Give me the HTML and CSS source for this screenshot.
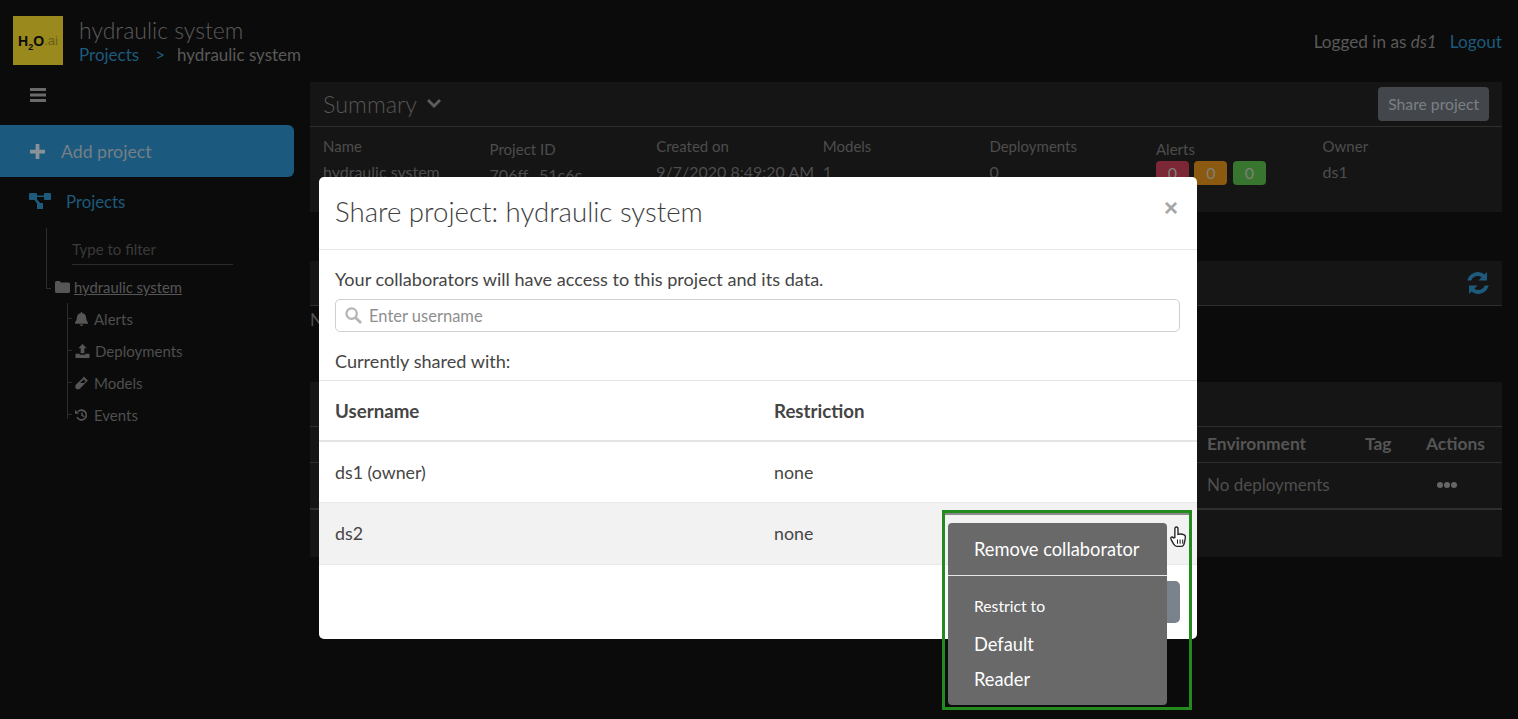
FILE: index.html
```html
<!DOCTYPE html>
<html lang="en">
<head>
    <meta charset="UTF-8">
    <title>hydraulic system</title>
    <link rel="stylesheet" href="styles.css">
</head>
<body>

<header class="topbar">
    <div class="logo"><span class="logo-h">H<sub>2</sub>O</span><span class="logo-ai">.ai</span></div>
    <div class="titles">
        <div class="page-title">hydraulic system</div>
        <div class="crumbs"><a class="link">Projects</a><span class="link sep">&gt;</span><span>hydraulic system</span></div>
    </div>
    <div class="login">Logged in as <em>ds1</em><a class="link logout">Logout</a></div>
</header>

<div class="layout">
    <aside class="sidebar">
        <svg class="burger" viewBox="0 0 16 14"><path d="M0 0h16v3H0zM0 5.500h16v3H0zM0 11h16v3H0z"/></svg>
        <div class="add-project">
            <svg class="plus" viewBox="0 0 16 16"><path d="M6 0h4v6h6v4h-6v6H6v-6H0V6h6z"/></svg>
            <span>Add project</span>
        </div>
        <div class="nav-projects">
            <svg class="sitemap" viewBox="0 0 22 16"><path d="M1 0h6q1 0 1 1v1.500h7V1q0-1 1-1h5q1 0 1 1v5q0 1-1 1h-5q-1 0-1-1V4H8v2.500L11.300 10H14v6H8v-5.500L5.500 7H1Q0 7 0 6V1q0-1 1-1z"/></svg>
            <span>Projects</span>
        </div>
        <div class="tree">
            <div class="filter">Type to filter</div>
            <div class="project-node">
                <svg class="folder" viewBox="0 0 15 12"><path d="M0 1.500Q0 0 1.500 0h3L6 1.500h7.500Q15 1.500 15 3v7.500q0 1.500-1.500 1.500h-12Q0 12 0 10.500z"/></svg>
                <span class="node-name">hydraulic system</span>
            </div>
            <ul class="subnav">
                <li>
                    <svg class="sub-icon" viewBox="0 0 14 15"><path d="M7 0q1 0 1 1.200 4 .8 4 5 0 3 2 5.300V12.500H0v-1Q2 9.200 2 6.200q0-4.200 4-5Q6 0 7 0zM5 13.500h4Q8.800 15 7 15t-2-1.500z"/></svg>
                    <span>Alerts</span>
                </li>
                <li>
                    <svg class="sub-icon wide" viewBox="0 0 15 15"><path d="M7.500 0l4.500 4.500H9.500V10h-4V4.500H3zM0 10.500h4.500v1h6v-1H15V15H0z"/></svg>
                    <span class="after-wide">Deployments</span>
                </li>
                <li>
                    <svg class="sub-icon" viewBox="0 0 14 14"><path d="M9.500 0L14 4.500 12.800 5.500 5.500 12.800Q3.500 14.500 1.500 13.500T.8 9L8.500 1.500zM9.300 3.200L5.500 7h4.200l1.800-1.800z" fill-rule="evenodd"/></svg>
                    <span>Models</span>
                </li>
                <li>
                    <svg class="sub-icon" viewBox="0 0 16 15"><path class="outline" d="M3.500 3.500A6 6 0 1 1 2.500 10" stroke-width="2"/><path class="outline" d="M8.500 4.500V8l3 1.500" stroke-width="1.700"/><path d="M0 1l5 5H0z"/></svg>
                    <span>Events</span>
                </li>
            </ul>
        </div>
    </aside>

    <main class="content">
        <section class="panel summary">
            <div class="panel-head">
                <h2>Summary</h2>
                <svg class="chevron" viewBox="0 0 14 10"><path d="M2 0l5 5 5-5 2 2-7 7-7-7z"/></svg>
                <button class="btn-share">Share project</button>
            </div>
            <div class="facts">
                <div class="fact"><label>Name</label><div>hydraulic system</div></div>
                <div class="fact low"><label>Project ID</label><div>706ff...51c6c</div></div>
                <div class="fact"><label>Created on</label><div>9/7/2020 8:49:20 AM</div></div>
                <div class="fact"><label>Models</label><div>1</div></div>
                <div class="fact"><label>Deployments</label><div>0</div></div>
                <div class="fact low">
                    <label>Alerts</label>
                    <div class="badges"><span class="badge red">0</span><span class="badge orange">0</span><span class="badge green">0</span></div>
                </div>
                <div class="fact"><label>Owner</label><div>ds1</div></div>
            </div>
        </section>

        <section class="panel alerts">
            <div class="panel-head short">
                <svg class="refresh" viewBox="0 0 24 24"><path d="M21 1v8.500h-8.500l3.200-3.200A6.800 6.800 0 0 0 5.200 9.500H1.300A10.500 10.500 0 0 1 18.400 3.600zM3 23v-8.500h8.500l-3.200 3.200a6.800 6.800 0 0 0 10.500-3.200h3.900A10.500 10.500 0 0 1 5.600 20.400z"/></svg>
            </div>
            <div class="panel-note">None</div>
        </section>

        <section class="panel deployments">
            <div class="deploy-head"></div>
            <div class="deploy-row th"><span class="c-env">Environment</span><span class="c-tag">Tag</span><span class="c-act">Actions</span></div>
            <div class="deploy-row td">
                <span class="c-env">No deployments</span><span class="c-tag"></span>
                <span class="c-act"><span class="dots"><i></i><i></i><i></i></span></span>
            </div>
        </section>
    </main>
</div>

<div class="modal">
    <div class="modal-head">
        <h3>Share project: hydraulic system</h3>
        <span class="close">&times;</span>
    </div>
    <div class="modal-body">
        <p>Your collaborators will have access to this project and its data.</p>
        <div class="search">
            <svg class="search-icon" viewBox="0 0 18 18"><circle class="outline" cx="7" cy="7" r="5.500" stroke-width="2.400"/><path class="outline" d="M11 11l6 6" stroke-width="3"/></svg>
            <span>Enter username</span>
        </div>
        <p class="shared">Currently shared with:</p>
    </div>
    <div class="row head"><span class="col-user">Username</span><span>Restriction</span></div>
    <div class="row"><span class="col-user">ds1 (owner)</span><span>none</span></div>
    <div class="row hovered"><span class="col-user">ds2</span><span>none</span></div>
    <div class="modal-foot"><button class="btn-close">Close</button></div>
</div>

<div class="callout"></div>
<div class="dropdown">
    <div class="dd-item">Remove collaborator</div>
    <div class="dd-section">
        <div class="dd-label">Restrict to</div>
        <div class="dd-item">Default</div>
        <div class="dd-item">Reader</div>
    </div>
</div>
<svg class="hand" viewBox="0 0 16 22"><path d="M5 11V3q0-2 1.500-2T8 3v5q3-.8 6 .5 1.500.8 1 3l-1 5q-.5 3-3 3H7q-2 0-3-2L1.500 13q-1-1.500 0-2.200T4 11.500z"/><path class="lines" d="M7.500 13v4M10 13v4M12.500 13v4"/></svg>

</body>
</html>
```

FILE: styles.css
```css
* {
    box-sizing: border-box;
}
html, body {
    height: 100%;
}
body {
    margin: 0;
    height: 719px;
    overflow: hidden;
    background-color: #0b0b0b;
    color: #525252;
    font-family: "Lato", "Noto Sans", sans-serif;
    font-size: 17px;
}
svg {
    display: block;
    flex: none;
    fill: currentColor;
    stroke: currentColor;
    stroke-width: 0;
}
svg .outline {
    fill: none;
}
.link {
    color: #1d5a7c;
}

/* top bar */
.topbar {
    display: flex;
    align-items: flex-start;
    height: 82px;
    padding: 16px 16px 0 13px;
}
.logo {
    display: flex;
    align-items: center;
    justify-content: center;
    width: 50px;
    height: 49px;
    background-color: #9a8a1d;
    color: #0b0b0b;
    font-family: "Liberation Sans", sans-serif;
    font-size: 14px;
    font-weight: bold;
}
.logo sub {
    font-size: 9px;
    line-height: 0;
}
.logo-ai {
    font-size: 13px;
    font-weight: normal;
    color: #6b5f16;
}
.titles {
    margin-left: 16px;
}
.page-title {
    font-size: 23px;
    line-height: 28px;
    font-weight: 300;
    color: #5c5c5c;
}
.crumbs {
    display: flex;
    line-height: 22px;
    font-size: 17px;
    color: #595959;
}
.sep {
    margin: 0 12px 0 16px;
}
.login {
    margin-left: auto;
    margin-top: 15px;
    line-height: 22px;
    font-size: 17.200px;
    color: #595959;
}
.logout {
    margin-left: 13px;
}

/* layout */
.layout {
    display: flex;
}
.sidebar {
    width: 310px;
    flex: none;
}
.content {
    flex: 1;
    margin-right: 16px;
}

/* sidebar */
.burger {
    width: 16px;
    height: 14px;
    margin: 6px 0 0 30px;
    color: #6a6a6a;
}
.add-project {
    display: flex;
    align-items: center;
    width: 294px;
    height: 52px;
    margin-top: 23px;
    padding-left: 30px;
    background-color: #1b5a7e;
    border-radius: 0 6px 6px 0;
    color: #757f85;
    font-size: 17.700px;
}
.plus {
    width: 15px;
    height: 15px;
    margin-right: 16px;
    color: #8a9297;
}
.nav-projects {
    display: flex;
    align-items: center;
    height: 50px;
    padding: 0 0 2px 29px;
    color: #1d5a7c;
    font-size: 16.800px;
}
.sitemap {
    width: 22px;
    height: 16px;
    margin-right: 15px;
}
.tree {
    position: relative;
    margin-left: 46px;
    padding-left: 26px;
    padding-top: 11px;
}
.tree::before {
    content: "";
    position: absolute;
    left: 0;
    top: 1px;
    width: 4px;
    height: 60px;
    border-left: 1px solid #2c2c2c;
    border-bottom: 1px solid #2c2c2c;
}
.filter {
    width: 161px;
    height: 27px;
    font-size: 15px;
    line-height: 22px;
    color: #3a3a3a;
    border-bottom: 1px solid #2c2c2c;
}
.project-node {
    display: flex;
    align-items: center;
    height: 22px;
    margin-top: 11px;
    margin-left: -17px;
    font-size: 14.800px;
    color: #565656;
}
.folder {
    width: 15px;
    height: 12px;
    margin-right: 4px;
}
.node-name {
    text-decoration: underline;
}
.subnav {
    position: relative;
    list-style: none;
    margin: 5px 0 0 -1px;
    padding: 0;
    font-size: 15px;
    color: #4f4f4f;
}
.subnav::before {
    content: "";
    position: absolute;
    left: -4px;
    top: 0;
    height: 116px;
    width: 0;
    border-left: 1px solid #2c2c2c;
}
.subnav li {
    position: relative;
    display: flex;
    align-items: center;
    height: 32px;
    padding-left: 4px;
}
.subnav li::before {
    content: "";
    position: absolute;
    left: -4px;
    top: 15px;
    width: 5px;
    border-top: 1px solid #2c2c2c;
}
.sub-icon {
    width: 13px;
    height: 14px;
    margin-right: 6px;
    color: #565656;
}
.sub-icon.wide {
    width: 15px;
}
.after-wide {
    margin-left: -1px;
}

/* panels */
.panel {
    background-color: #151515;
    margin-bottom: 49px;
}
.panel-head {
    display: flex;
    align-items: center;
    height: 45px;
    padding: 0 13px;
    border-bottom: 1px solid #2f2f2f;
}
.panel-head h2 {
    margin: 0;
    font-size: 23.400px;
    font-weight: 300;
    color: #565656;
}
.chevron {
    width: 14px;
    height: 10px;
    margin-left: 10px;
    color: #5c5c5c;
}
.btn-share {
    margin-left: auto;
    width: 111px;
    height: 34px;
    padding: 0;
    border: none;
    border-radius: 4px;
    background-color: #43474c;
    color: #7b8085;
    font-family: inherit;
    font-size: 15.700px;
}
.summary {
    height: 130px;
}
.facts {
    display: grid;
    grid-template-columns: repeat(7, 166.600px);
    padding: 9px 13px 0;
    font-size: 16px;
    color: #4d4d4d;
}
.fact label {
    display: block;
    font-size: 15px;
    line-height: 20px;
    margin-bottom: 6px;
    color: #4d4d4d;
}
.fact.low {
    padding-top: 3px;
}
.fact.low .badges {
    margin-top: -4px;
}
.badges {
    display: flex;
    gap: 5.500px;
}
.badge {
    width: 33px;
    height: 24px;
    border-radius: 4px;
    text-align: center;
    line-height: 24px;
    color: #80807a;
}
.red {
    background-color: #7c2735;
}
.orange {
    background-color: #8b5a10;
}
.green {
    background-color: #38762f;
}
.panel.alerts {
    height: 72px;
    background: none;
}
.panel-head.short {
    height: 45px;
    justify-content: flex-end;
    background-color: #151515;
}
.refresh {
    width: 24px;
    height: 24px;
    margin-right: -1px;
    color: #1d5a7c;
}
.panel-note {
    margin-top: 2px;
    line-height: 24px;
}
.deploy-head {
    height: 45px;
    border-bottom: 1px solid #2f2f2f;
}
.deployments {
    height: 175px;
    margin-bottom: 0;
}
.deploy-row {
    display: flex;
    align-items: center;
    padding-left: 897px;
    padding-bottom: 2px;
    border-bottom: 1px solid #2f2f2f;
}
.deploy-row.th {
    height: 36px;
    font-size: 17.400px;
    font-weight: bold;
    color: #555;
}
.deploy-row.td {
    height: 47px;
    color: #4f4f4f;
    border-bottom-width: 2px;
}
.c-env {
    width: 158px;
}
.c-tag {
    width: 61px;
}
.dots {
    display: flex;
    gap: 1px;
    margin-left: 11px;
}
.dots i {
    width: 6px;
    height: 6px;
    border-radius: 50%;
    background-color: #666;
}

/* modal */
.modal {
    position: absolute;
    left: 319px;
    top: 177px;
    width: 878px;
    height: 462px;
    background-color: #fff;
    border-radius: 5px;
    color: #454545;
}
.modal-head {
    display: flex;
    align-items: center;
    justify-content: space-between;
    height: 73px;
    padding: 0 19px 3px 16px;
    border-bottom: 1px solid #e6e6e6;
}
.modal-head h3 {
    margin: 0;
    font-size: 27.600px;
    font-weight: 300;
    color: #404040;
}
.close {
    font-family: "Liberation Sans", sans-serif;
    font-size: 24px;
    font-weight: bold;
    color: #a6a6a6;
    margin-bottom: 8px;
}
.modal-body {
    padding: 17px 17px 0 16px;
    font-size: 18.100px;
}
.modal-body p {
    margin: 0;
    line-height: 24px;
}
.search {
    display: flex;
    align-items: center;
    height: 33px;
    margin-top: 8px;
    padding-left: 9px;
    border: 1px solid #cfcfcf;
    border-radius: 5px;
    color: #8f8f8f;
    font-size: 16.500px;
}
.search-icon {
    width: 17px;
    height: 17px;
    margin-right: 7px;
    color: #b5b5b5;
}
.modal-body .shared {
    margin-top: 17px;
    height: 31px;
}
.row {
    display: flex;
    align-items: center;
    height: 61px;
    padding: 0 0 1px 16px;
    border-bottom: 1px solid #e9e9e9;
    font-size: 17.800px;
}
.row.head {
    height: 62px;
    padding: 0 0 0 16px;
    border-top: 1px solid #e4e4e4;
    border-bottom: 2px solid #e4e4e4;
    font-size: 18.700px;
    font-weight: bold;
}
.row.hovered {
    height: 62px;
    background-color: #f2f2f2;
}
.col-user {
    width: 439px;
}
.modal-foot {
    display: flex;
    justify-content: flex-end;
    padding: 16px 17px 0;
}
.btn-close {
    width: 80px;
    height: 42px;
    border: none;
    border-radius: 5px;
    background-color: #7a828c;
    color: #fff;
    font-family: inherit;
    font-size: 17px;
}

/* dropdown + annotation */
.callout {
    position: absolute;
    left: 942px;
    top: 510px;
    width: 250px;
    height: 200px;
    border: 3px solid #238a1e;
    box-shadow: inset 0 2px #8a8a8a;
}
.dropdown {
    position: absolute;
    left: 948px;
    top: 523px;
    width: 219px;
    height: 182px;
    background-color: #696969;
    border-radius: 4px;
    color: #fff;
}
.dd-item {
    height: 35px;
    padding-left: 26px;
    line-height: 35px;
    font-size: 18.300px;
}
.dropdown > .dd-item {
    height: 53px;
    line-height: 53px;
    border-bottom: 1px solid #e6e6e6;
}
.dd-section {
    padding-top: 13px;
}
.dd-label {
    height: 34px;
    margin-bottom: 4px;
    padding-left: 26px;
    line-height: 34px;
    font-size: 15.700px;
}
.hand {
    position: absolute;
    left: 1169px;
    top: 526px;
    width: 18px;
    height: 23px;
    fill: #fff;
    stroke: #222;
    stroke-width: 1.300;
}
.hand .lines {
    fill: none;
    stroke-width: 1;
}
```
